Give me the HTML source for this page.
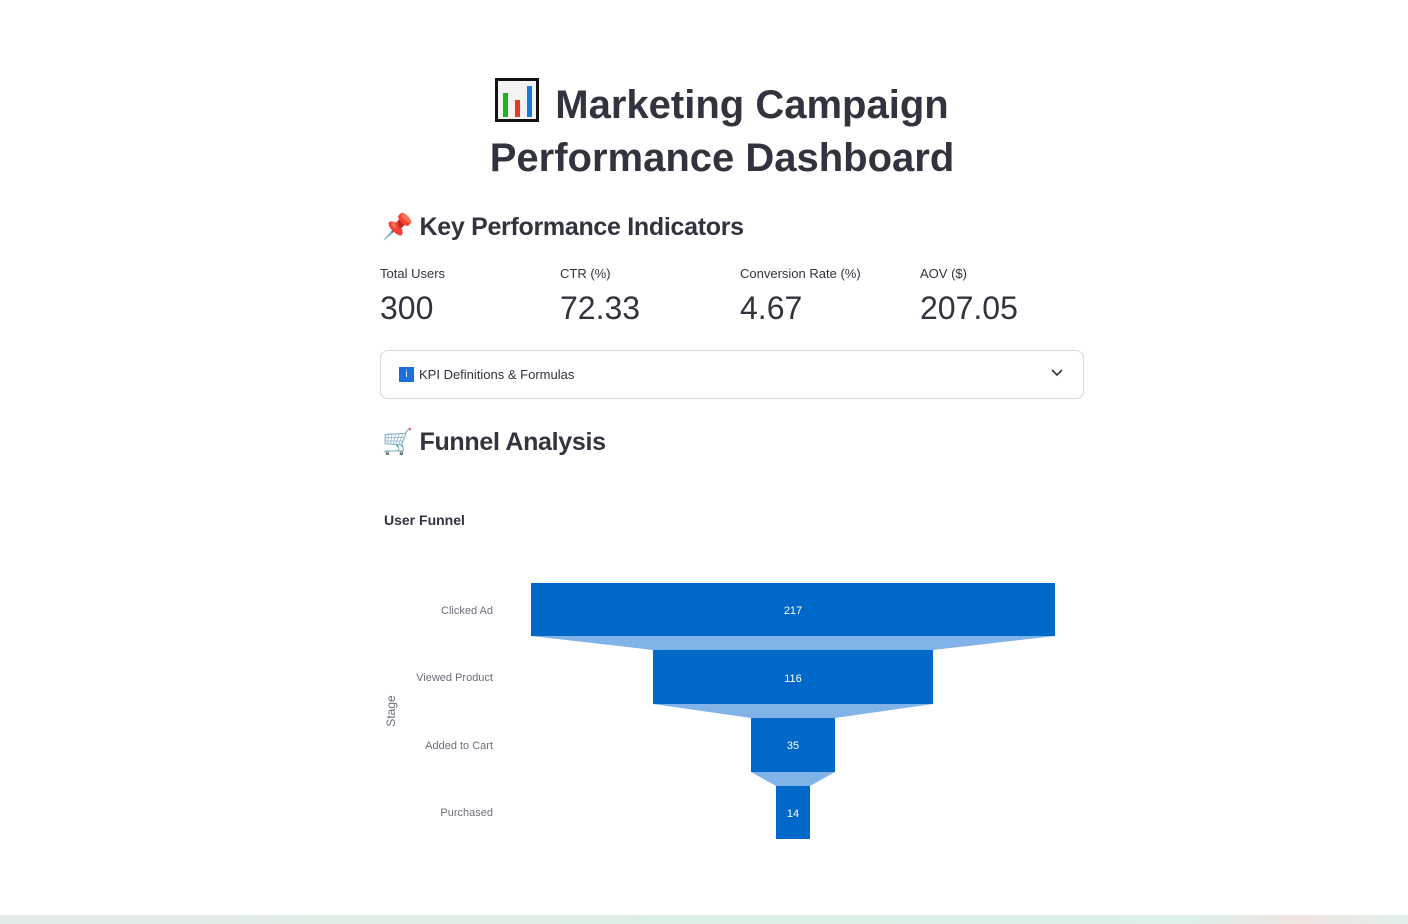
<!DOCTYPE html>
<html><head><meta charset="utf-8"><style>
body{margin:0;width:1408px;height:924px;background:#fff;font-family:"Liberation Sans",sans-serif;color:#31333f;position:relative;overflow:hidden}
.a{position:absolute;white-space:nowrap}
h1{margin:0;font-size:40px;font-weight:bold;text-align:center;line-height:53px;letter-spacing:0}
.h2{font-size:25px;font-weight:bold;letter-spacing:-0.3px}
.lbl{font-size:13px}
.val{font-size:32px;font-weight:300}
</style></head><body>
<div class="a" style="left:370px;top:78px;width:704px"><h1><span style="display:inline-block;vertical-align:-4px;width:44px;height:44px;border:3px solid #111;box-sizing:border-box;background:#f3f3f3;position:relative;margin-right:16px"><span style="position:absolute;left:5px;bottom:2px;width:5px;height:24px;background:#1db31d"></span><span style="position:absolute;left:17px;bottom:2px;width:5px;height:17px;background:#e8381e"></span><span style="position:absolute;left:29px;bottom:2px;width:5px;height:31px;background:#1a78e0"></span></span>Marketing Campaign<br>Performance Dashboard</h1></div>
<div class="a h2" style="left:382px;top:213px"><span style="color:#d8291d;font-weight:normal">📌</span> Key Performance Indicators</div>
<div class="a lbl" style="left:380px;top:266px">Total Users</div>
<div class="a val" style="left:380px;top:290px">300</div>
<div class="a lbl" style="left:560px;top:266px">CTR (%)</div>
<div class="a val" style="left:560px;top:290px">72.33</div>
<div class="a lbl" style="left:740px;top:266px">Conversion Rate (%)</div>
<div class="a val" style="left:740px;top:290px">4.67</div>
<div class="a lbl" style="left:920px;top:266px">AOV ($)</div>
<div class="a val" style="left:920px;top:290px">207.05</div>
<div class="a" style="left:380px;top:350px;width:702px;height:47px;border:1px solid #d6d6d9;border-radius:8px"></div>
<div class="a" style="left:399px;top:367px;width:15px;height:15px;background:#1a6fd8;color:#fff;font-size:10px;text-align:center;line-height:15px">i</div>
<div class="a" style="left:419px;top:367px;font-size:13px">KPI Definitions &amp; Formulas</div>
<svg class="a" style="left:1050px;top:368px" width="14" height="10"><path d="M2 2l5 5 5-5" fill="none" stroke="#31333f" stroke-width="1.6"/></svg>
<div class="a h2" style="left:382px;top:428px"><span style="font-weight:normal">🛒</span> Funnel Analysis</div>
<div class="a" style="left:384px;top:512px;font-size:14px;font-weight:bold">User Funnel</div>
<svg class="a" style="left:0;top:0" width="1408" height="924">
<g fill="#82b3e8"><polygon points="531,636 1055,636 933,650 653,650"/><polygon points="653,704 933,704 835,718 751,718"/><polygon points="751,772 835,772 810,786 776,786"/></g>
<g fill="#0068c9"><rect x="531" y="583" width="524" height="53"/><rect x="653" y="650" width="280" height="54"/><rect x="751" y="718" width="84" height="54"/><rect x="776" y="786" width="34" height="53"/></g>
<g fill="#fff" font-size="11" text-anchor="middle" font-family="Liberation Sans"><text x="793" y="614">217</text><text x="793" y="682">116</text><text x="793" y="749">35</text><text x="793" y="817">14</text></g>
<g fill="#6b6e7c" font-size="11" text-anchor="end" font-family="Liberation Sans"><text x="493" y="614">Clicked Ad</text><text x="493" y="681">Viewed Product</text><text x="493" y="749">Added to Cart</text><text x="493" y="816">Purchased</text></g>
<text x="395" y="711" fill="#6b6e7c" font-size="12" text-anchor="middle" transform="rotate(-90 395 711)" font-family="Liberation Sans">Stage</text>
</svg>
<div class="a" style="left:0;top:915px;width:1408px;height:9px;background:linear-gradient(90deg,#e3ebe6,#dcefe4 50%,#dcefe8 85%,#f0e4e0 92%,#e0efe9)"></div>
</body></html>
